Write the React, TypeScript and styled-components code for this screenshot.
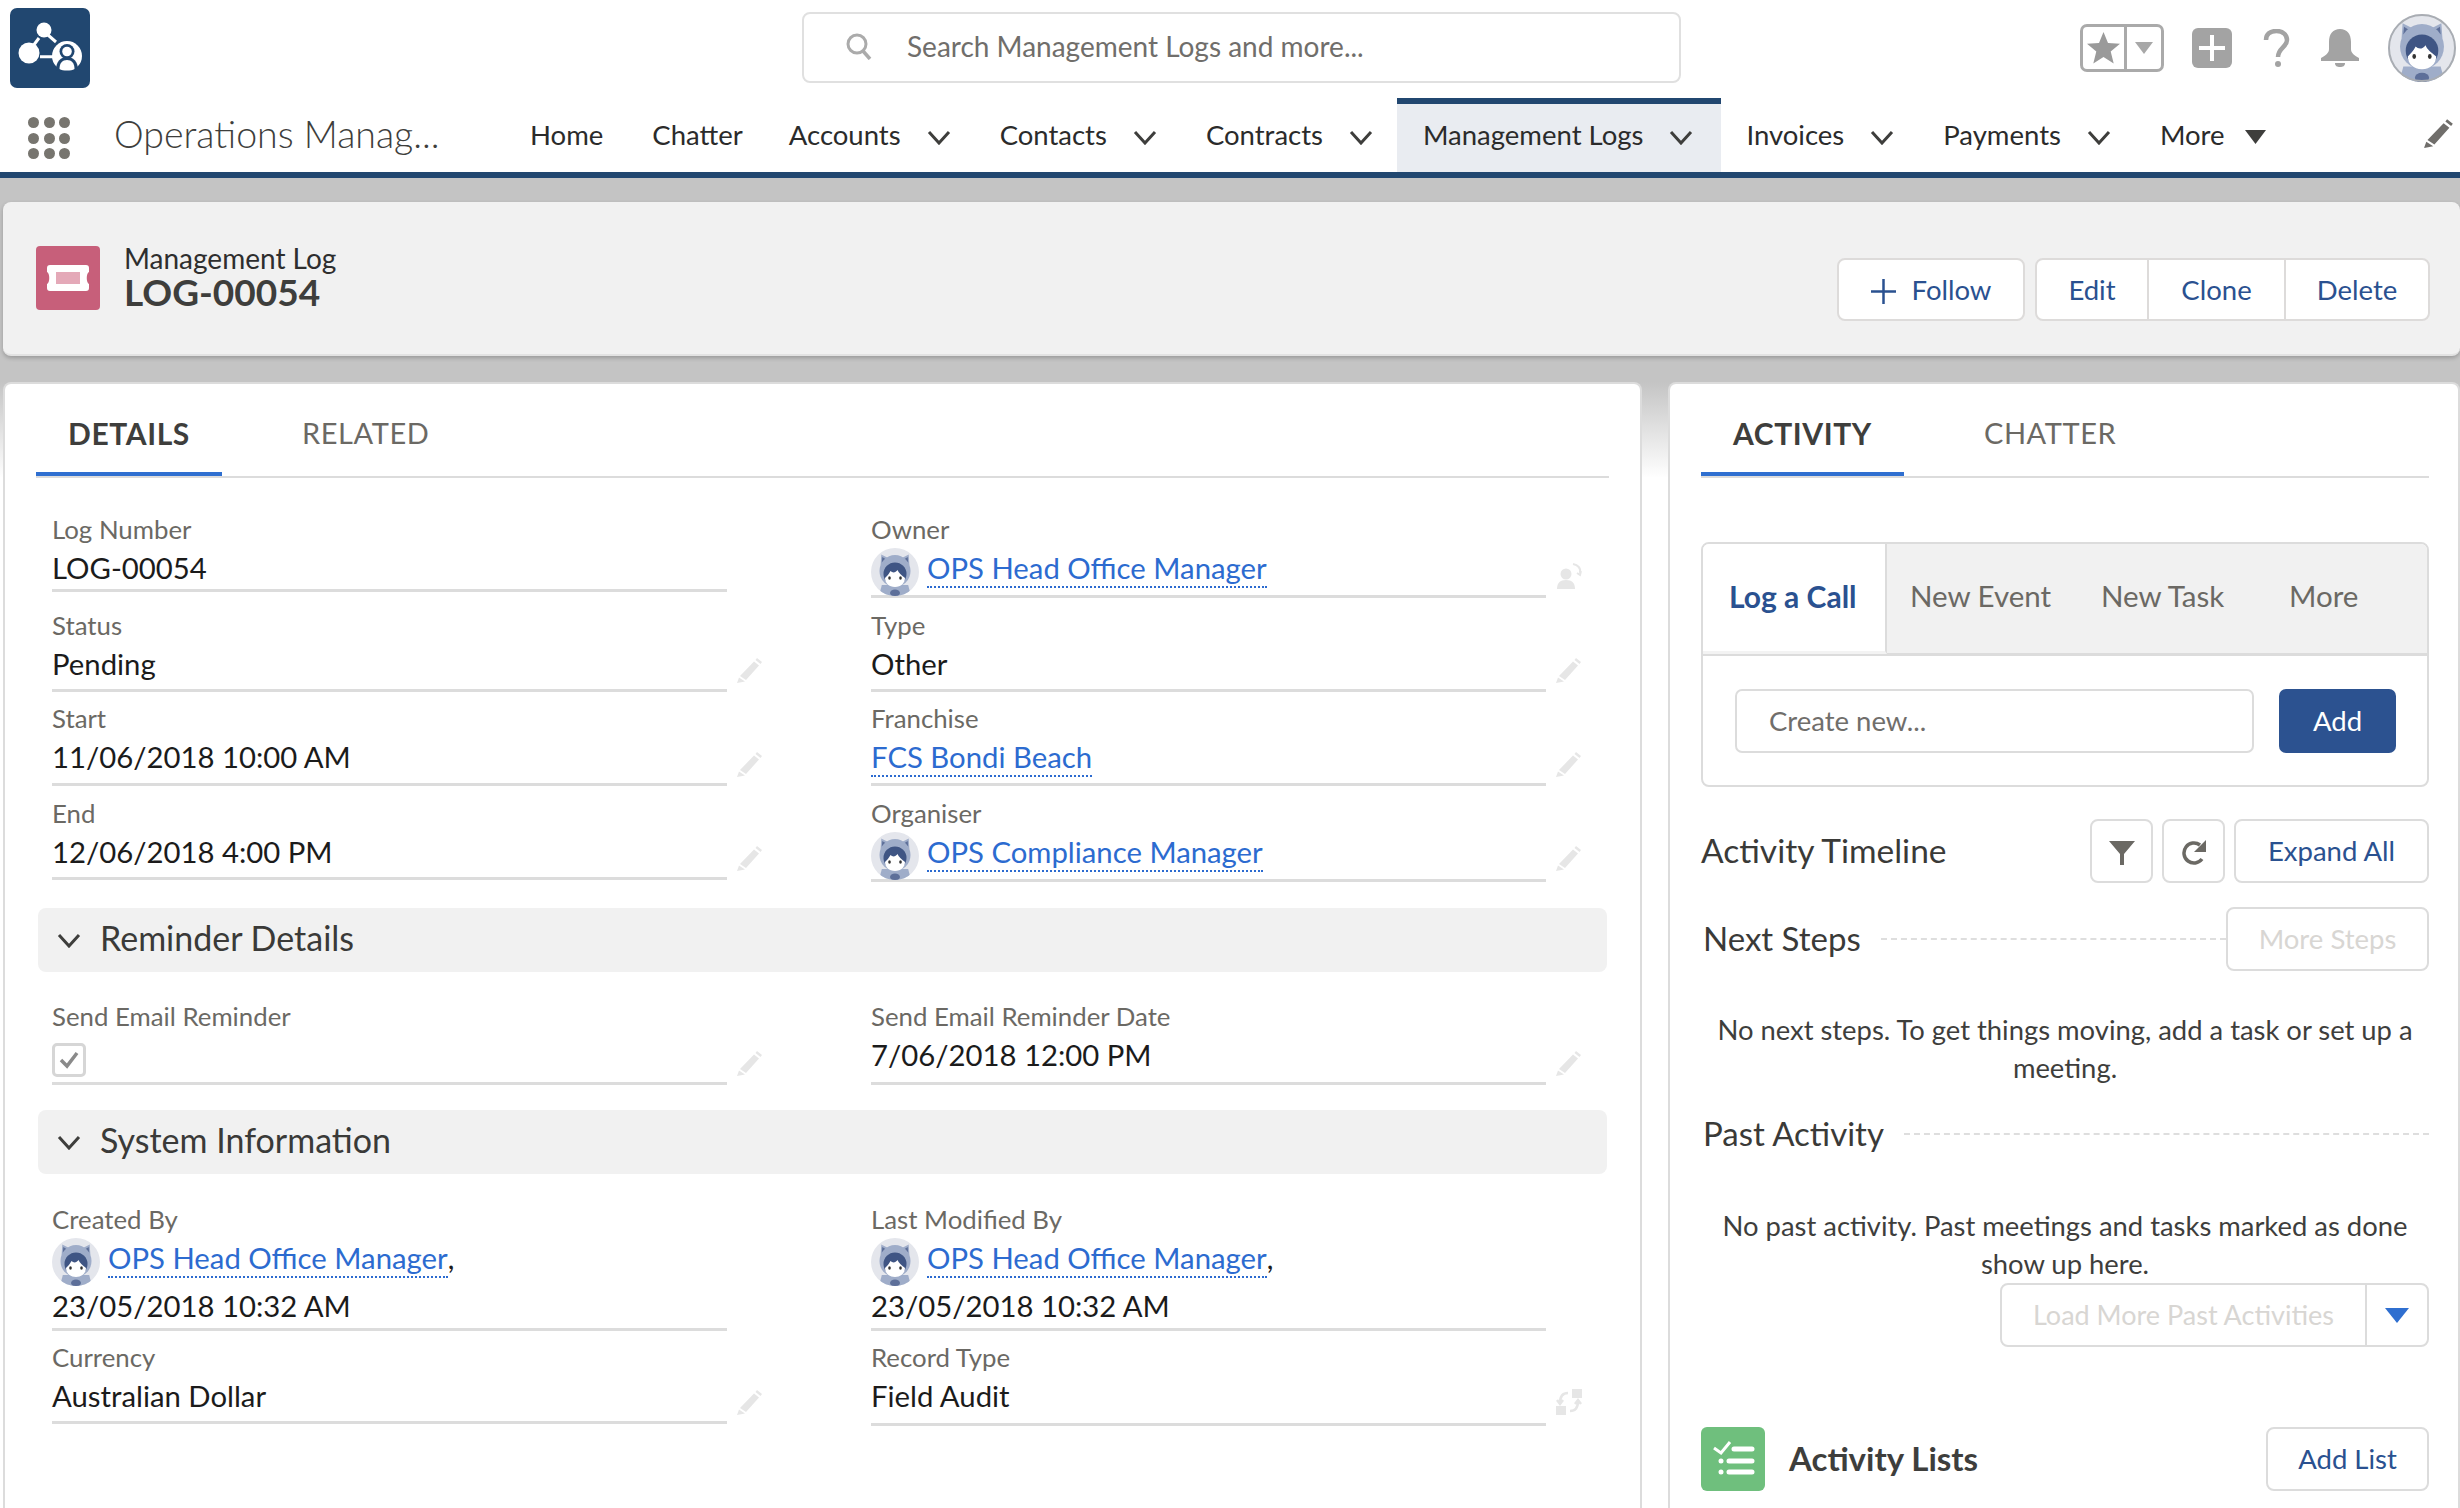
import React from "react";
import styled, { createGlobalStyle } from "styled-components";

const GlobalStyle = createGlobalStyle`
  html, body {
    margin: 0;
    padding: 0;
    background: #fff;
  }
  body {
    width: 2460px;
    height: 1508px;
    overflow: hidden;
    font-family: Lato, "Open Sans", "Liberation Sans", sans-serif;
    color: #16191f;
  }
  * {
    box-sizing: border-box;
  }
`;

const NAVY = "#214770";
const LINK = "#2c6bd0";
const ACTION = "#2a5190";
const LINE = "#dcdcdc";

const TopRow = styled.div`
  display: flex;
  height: 98px;
`;
const Logo = styled.div`
  width: 80px;
  height: 80px;
  margin: 8px 0 0 10px;
  background: ${NAVY};
  border-radius: 7px;
`;
const SearchBox = styled.div`
  display: flex;
  align-items: center;
  width: 879px;
  height: 71px;
  margin: 12px 0 0 712px;
  padding: 0 0 3px 42px;
  border: 2px solid #e0e0e0;
  border-radius: 8px;
  color: #706e6b;
  font-size: 28px;
`;
const SearchText = styled.span`
  margin-left: 35px;
`;
const GlobalIcons = styled.div`
  display: flex;
  align-items: center;
  height: 96px;
  margin-left: 399px;
`;
const FavGroup = styled.div`
  display: flex;
  align-items: center;
  width: 84px;
  height: 48px;
  border: 3px solid #aaa;
  border-radius: 7px;
`;
const FavStar = styled.div`
  display: flex;
  justify-content: center;
  width: 44px;
  border-right: 3px solid #aaa;
  height: 100%;
  align-items: center;
`;
const FavCaret = styled.div`
  flex: 1;
  display: flex;
  justify-content: center;
`;
const HeadIcon = styled.div<{ $gap: number }>`
  display: flex;
  margin-left: ${(p) => p.$gap}px;
`;

const NavRow = styled.div`
  display: flex;
  align-items: stretch;
  height: 80px;
  border-bottom: 6px solid ${NAVY};
  position: relative;
`;
const Launcher = styled.div`
  display: grid;
  grid-template-columns: repeat(3, 11px);
  gap: 4.5px;
  align-content: center;
  width: 42px;
  margin-left: 28px;
  padding-top: 6px;
`;
const Dot = styled.span`
  width: 11px;
  height: 11px;
  border-radius: 50%;
  background: #77756f;
`;
const AppName = styled.div`
  width: 416px;
  margin-left: 44px;
  font-size: 37.5px;
  font-weight: 300;
  line-height: 71px;
  color: #3e3e3c;
`;
const NavList = styled.div`
  display: flex;
  gap: 49px;
`;
const NavItem = styled.div<{ $active?: boolean; $pull?: number }>`
  display: flex;
  align-items: center;
  gap: 26px;
  margin-left: ${(p) => (p.$pull ? -p.$pull : 0)}px;
  padding-bottom: 2px;
  font-size: 27.5px;
  color: #2b2b2b;
  ${(p) =>
    p.$active &&
    `
    margin: 0 -24px 0 -25px;
    padding: 0 28px 2px 26px;
    background: #e9ecf1;
    box-shadow: inset 0 6px 0 ${NAVY};
  `}
`;
const NavEdit = styled.div`
  position: absolute;
  right: 6px;
  top: 20px;
  display: flex;
`;

const Page = styled.div`
  height: 1330px;
  padding: 24px 0 0 3px;
  background: linear-gradient(#c4c4c4 0, #c4c4c4 204px, #fff 300px);
`;
const Highlights = styled.div`
  display: flex;
  align-items: center;
  height: 154px;
  padding: 0 30px 0 33px;
  background: #f1f1f1;
  border-bottom: 2px solid #e2e2e2;
  border-radius: 8px 8px 8px 8px;
  box-shadow: 0 2px 4px rgba(0, 0, 0, 0.22);
`;
const PageIcon = styled.div`
  display: flex;
  align-items: center;
  justify-content: center;
  width: 64px;
  height: 64px;
  background: #c75f7a;
  border-radius: 4px;
`;
const TitleBlock = styled.div`
  margin-left: 24px;
  padding-bottom: 2px;
  flex: 1;
`;
const RecordType = styled.div`
  font-size: 28px;
  line-height: 30px;
  color: #2e2e2e;
`;
const RecordName = styled.div`
  font-size: 37px;
  font-weight: 700;
  line-height: 38px;
  color: #3e3e3c;
`;
const ActionRow = styled.div`
  display: flex;
  gap: 10px;
  margin-top: 22px;
`;
const ButtonGroup = styled.div`
  display: flex;
  height: 63px;
  background: #fff;
  border: 2px solid #dddbda;
  border-radius: 8px;
  overflow: hidden;
`;
const GroupButton = styled.div<{ $w: number; $sep?: boolean }>`
  display: flex;
  align-items: center;
  justify-content: center;
  gap: 16px;
  width: ${(p) => p.$w}px;
  color: ${ACTION};
  font-size: 27.5px;
  ${(p) => p.$sep && "border-left: 2px solid #dddbda;"}
`;

const Columns = styled.div`
  display: flex;
  gap: 26px;
  margin-top: 26px;
`;
const Card = styled.div<{ $w: number; $right: number }>`
  width: ${(p) => p.$w}px;
  height: 1126px;
  padding: 0 ${(p) => p.$right}px 0 31px;
  background: #fff;
  border: 2px solid #dcdcdc;
  border-bottom: 0;
  border-radius: 8px 8px 0 0;
`;
const TabBar = styled.div`
  display: flex;
  gap: 48px;
  height: 94px;
  border-bottom: 2px solid ${LINE};
`;
const Tab = styled.div<{ $active?: boolean }>`
  display: flex;
  align-items: center;
  justify-content: center;
  height: 92px;
  padding: 9px 32px 0;
  font-size: ${(p) => (p.$active ? 30 : 29)}px;
  letter-spacing: 0.6px;
  text-transform: uppercase;
  font-weight: ${(p) => (p.$active ? 700 : 400)};
  color: ${(p) => (p.$active ? "#3e3e3c" : "#6b6964")};
  border-bottom: 4px solid ${(p) => (p.$active ? "#2f6fd0" : "transparent")};
`;

const FieldRows = styled.div<{ $top: number }>`
  margin: ${(p) => p.$top}px -31px 0 -31px;
  padding-left: 47px;
`;
const Row = styled.div<{ $h: number }>`
  display: grid;
  grid-template-columns: 819px 711px;
  height: ${(p) => p.$h}px;
`;
const Field = styled.div`
  display: flex;
  align-items: flex-start;
`;
const FieldBody = styled.div<{ $h: number }>`
  width: 675px;
  height: ${(p) => p.$h}px;
  border-bottom: 3px solid ${LINE};
`;
const Label = styled.div`
  height: 30px;
  font-size: 25.8px;
  line-height: 28px;
  color: #6b6964;
`;
const Value = styled.div`
  margin-top: 5px;
  font-size: 29.3px;
  line-height: 36px;
  color: #1b1b1b;
`;
const Who = styled.div`
  display: flex;
  align-items: flex-start;
  gap: 8px;
  height: 48px;
  margin-top: 3px;
  font-size: 29.3px;
  line-height: 36px;
  color: #1b1b1b;
`;
const WhoDate = styled.div`
  margin-top: 2px;
  font-size: 29.3px;
  line-height: 36px;
  color: #1b1b1b;
`;
const Link = styled.a`
  display: inline-block;
  color: ${LINK};
  border-bottom: 2px dotted ${LINK};
`;
const WhoLink = styled(Link)`
  margin-top: 2px;
`;
const EditSlot = styled.div<{ $h: number }>`
  display: flex;
  align-items: flex-end;
  height: ${(p) => p.$h}px;
  margin-left: 10px;
  padding-bottom: 9px;
`;
const Check = styled.div`
  display: flex;
  align-items: center;
  justify-content: center;
  width: 34px;
  height: 34px;
  margin-top: 11px;
  border: 3px solid #d6d6d6;
  border-radius: 5px;
`;
const Section = styled.div`
  display: flex;
  align-items: center;
  gap: 19px;
  height: 64px;
  margin: 0 2px 0 2px;
  padding: 0 0 5px 19px;
  background: #f1f1f1;
  border-radius: 8px;
  font-size: 34px;
  color: #3a3a38;
`;

const Composer = styled.div`
  height: 245px;
  margin-top: 64px;
  border: 2px solid ${LINE};
  border-radius: 8px;
  overflow: hidden;
`;
const ComposerTabs = styled.div`
  display: flex;
  height: 112px;
  background: #f1f1f1;
  border-bottom: 3px solid ${LINE};
  font-size: 29.5px;
  color: #6b6964;
`;
const ComposerActive = styled.div`
  display: flex;
  align-items: center;
  width: 184px;
  height: 110px;
  padding: 0 0 4px 26px;
  background: #fff;
  border-right: 2px solid ${LINE};
  border-bottom: 3px solid #f3f3f3;
  color: ${ACTION};
  font-size: 30px;
  font-weight: 700;
`;
const ComposerTab = styled.div<{ $w: number }>`
  display: flex;
  align-items: center;
  width: ${(p) => p.$w}px;
  padding-left: 23px;
  padding-bottom: 7px;
`;
const ComposerBody = styled.div`
  display: flex;
  gap: 25px;
  padding: 33px 31px 0 32px;
`;
const CreateInput = styled.div`
  display: flex;
  align-items: center;
  flex: 1;
  height: 64px;
  padding: 0 0 2px 32px;
  border: 2px solid ${LINE};
  border-radius: 7px;
  font-size: 27.5px;
  color: #706e6b;
`;
const AddButton = styled.div`
  display: flex;
  align-items: center;
  justify-content: center;
  width: 117px;
  height: 64px;
  padding-bottom: 2px;
  background: #2c5290;
  border-radius: 7px;
  color: #fff;
  font-size: 27.5px;
`;
const Timeline = styled.div`
  display: flex;
  align-items: center;
  gap: 9px;
  height: 64px;
  margin-top: 32px;
`;
const TimelineTitle = styled.div`
  flex: 1;
  padding-bottom: 3px;
  font-size: 33.5px;
  color: #3a3a38;
`;
const Outline = styled.div<{ $w: number; $muted?: boolean }>`
  display: flex;
  align-items: center;
  justify-content: center;
  flex: none;
  width: ${(p) => p.$w}px;
  height: 64px;
  padding-bottom: 2px;
  background: #fff;
  border: 2px solid ${LINE};
  border-radius: 8px;
  font-size: 27.5px;
  color: ${(p) => (p.$muted ? "#d8d6d3" : ACTION)};
`;
const IconOutline = styled(Outline)`
  padding: 3px 0 0;
`;
const StepHead = styled.div<{ $top: number }>`
  display: flex;
  align-items: center;
  height: 64px;
  margin-top: ${(p) => p.$top}px;
  padding-left: 2px;
  font-size: 33px;
  color: #3a3a38;
`;
const StepTitle = styled.span`
  padding-bottom: 2px;
`;
const Dashes = styled.div`
  flex: 1;
  margin-left: 20px;
  border-top: 2px dashed #dedede;
`;
const Empty = styled.div<{ $top: number }>`
  margin-top: ${(p) => p.$top}px;
  padding: 0 8px;
  font-size: 27.4px;
  line-height: 38px;
  text-align: center;
  color: #3e3e3c;
`;
const LoadRow = styled.div`
  display: flex;
  justify-content: flex-end;
`;
const LoadGroup = styled.div`
  display: flex;
  width: 429px;
  height: 64px;
  border: 2px solid ${LINE};
  border-radius: 8px;
`;
const LoadText = styled.div`
  display: flex;
  align-items: center;
  justify-content: center;
  width: 365px;
  padding-bottom: 2px;
  border-right: 2px solid ${LINE};
  font-size: 27px;
  color: #d8d6d3;
`;
const LoadCaret = styled.div`
  display: flex;
  align-items: center;
  justify-content: center;
  flex: 1;
`;
const ListsRow = styled.div`
  display: flex;
  align-items: center;
  margin-top: 80px;
`;
const ListsIcon = styled.div`
  display: flex;
  width: 64px;
  height: 64px;
  background: #6fbf7d;
  border-radius: 6px;
`;
const ListsTitle = styled.div`
  flex: 1;
  margin-left: 24px;
  padding-bottom: 2px;
  font-size: 33px;
  font-weight: 700;
  color: #3e3e3c;
`;

const LogoMark = () => (
  <svg width="80" height="80" viewBox="0 0 80 80">
    <circle cx="34" cy="22" r="7.5" fill="#fff" />
    <path d="M38 27l8 7M29 30l-6 8M30 48.700h14" stroke="#fff" strokeWidth="3" fill="none" />
    <circle cx="19" cy="45" r="10.5" fill="#fff" />
    <circle cx="57" cy="48" r="15" fill="#fff" />
    <circle cx="57" cy="43.500" r="7.500" fill={NAVY} />
    <path d="M46 62c0-9 5-13 11-13s11 4 11 13c-5 2-17 2-22 0z" fill={NAVY} />
    <circle cx="57" cy="43.500" r="4.800" fill="#fff" />
    <path d="M49.500 61c0-6 3-9 7.500-9s7.500 3 7.500 9c-3 2-12 2-15 0z" fill="#fff" />
  </svg>
);

const Avatar = ({ size, ring }: { size: number; ring?: boolean }) => (
  <svg width={size} height={size} viewBox="0 0 48 48" style={{ flex: "none" }}>
    <defs>
      <clipPath id="avatar-clip">
        <circle cx="24" cy="24" r="24" />
      </clipPath>
    </defs>
    <g clipPath="url(#avatar-clip)">
      <rect width="48" height="48" fill="#e4e6ec" />
      <path d="M10.300 6.500L9.600 17 19 11zM37.700 6.500L38.400 17 29 11z" fill="#9fadc9" />
      <path d="M11.300 9l-.5 5.500L16 12zM36.700 9l.5 5.500L32 12z" fill="#5d6f99" />
      <ellipse cx="24" cy="23" rx="15.500" ry="16" fill="#9fadc9" />
      <path d="M10.800 37h26.400L40 48H8z" fill="#9fadc9" />
      <ellipse cx="24" cy="45" rx="5" ry="3.500" fill="#5d6f99" />
      <circle cx="24" cy="26" r="11.500" fill="#3f5584" />
      <path d="M14 30c2-2 4-4 5.500-7 2 2 5 2 7-1 1 3 4 5 7.500 8 0 5-4 9-10 9s-10-4-10-9z" fill="#fff" />
      <ellipse cx="18.500" cy="30" rx="1.300" ry="1.700" fill="#333" />
      <ellipse cx="29.500" cy="30" rx="1.300" ry="1.700" fill="#333" />
    </g>
    {ring && <circle cx="24" cy="24" r="23.300" fill="none" stroke="#a9adb3" strokeWidth="1.400" />}
  </svg>
);

const Chevron = ({ w = 24, color = "#3e3e3c" }: { w?: number; color?: string }) => (
  <svg width={w} height="15" viewBox="0 0 24 15" style={{ marginTop: 6 }}>
    <path d="M2 2l10 11L22 2" fill="none" stroke={color} strokeWidth="3" />
  </svg>
);

const Pencil = ({ color = "#e6e6e6", w = 26, h = 26 }: { color?: string; w?: number; h?: number }) => (
  <svg width={w} height={h} viewBox="0 0 26 26">
    <path d="M20 1l5 4-1.500 2-5-4zM17 4.500l5 4L9 23 3 19zM2 20.500l6 4L0 26z" fill={color} />
  </svg>
);

const ChangeOwner = () => (
  <svg width="26" height="26" viewBox="0 0 26 26">
    <circle cx="10" cy="11" r="5.500" fill="#e6e6e6" />
    <path d="M1 26c0-6 3-9 9-9s9 3 9 9z" fill="#e6e6e6" />
    <path d="M17 1c5 1 8 4 7 9M21 10l3 2 1-4" fill="none" stroke="#e6e6e6" strokeWidth="2" />
  </svg>
);

const ChangeType = () => (
  <svg width="26" height="26" viewBox="0 0 26 26">
    <rect x="16" y="0" width="10" height="9" fill="#e6e6e6" />
    <rect x="0" y="17" width="10" height="9" fill="#e6e6e6" />
    <path d="M12 4C6 4 4 8 4 14M1 11l3 4 3-4M14 22c6 0 8-4 8-10M19 15l3-4 3 4" fill="none" stroke="#e6e6e6" strokeWidth="2.500" />
  </svg>
);

const OPS_HEAD = "OPS Head Office Manager";

const App = () => (
  <>
    <GlobalStyle />
    <TopRow>
      <Logo>
        <LogoMark />
      </Logo>
      <SearchBox>
        <svg width="26" height="27" viewBox="0 0 26 27">
          <circle cx="11" cy="11" r="9" fill="none" stroke="#ababab" strokeWidth="3" />
          <path d="M17 18l7 8" stroke="#ababab" strokeWidth="3.500" />
        </svg>
        <SearchText>Search Management Logs and more...</SearchText>
      </SearchBox>
      <GlobalIcons>
        <FavGroup>
          <FavStar>
            <svg width="33" height="32" viewBox="0 0 33 32">
              <path d="M16.500 0l4.500 11 12 .800-9.300 7.700 3 12-10.200-6.500L6.300 31.500l3-12L0 11.800 12 11z" fill="#9a9a9a" />
            </svg>
          </FavStar>
          <FavCaret>
            <svg width="18" height="12" viewBox="0 0 18 12">
              <path d="M0 0h18L9 12z" fill="#a8a8a8" />
            </svg>
          </FavCaret>
        </FavGroup>
        <HeadIcon $gap={28}>
          <svg width="40" height="40" viewBox="0 0 40 40">
            <rect width="40" height="40" rx="6" fill="#a3a3a3" />
            <path d="M20 7v26M7 20h26" stroke="#fff" strokeWidth="4" />
          </svg>
        </HeadIcon>
        <HeadIcon $gap={31}>
          <svg width="27" height="38" viewBox="0 0 27 38">
            <path d="M3 11C3 5 7 2 13.500 2S24 6 24 11c0 7-9 8-9 17" fill="none" stroke="#a3a3a3" strokeWidth="4.500" />
            <circle cx="15" cy="35" r="3" fill="#a3a3a3" />
          </svg>
        </HeadIcon>
        <HeadIcon $gap={31}>
          <svg width="38" height="38" viewBox="0 0 38 38">
            <path d="M19 0c7 0 11 5 11 13v7c0 4 3 6 8 9v3H0v-3c5-3 8-5 8-9v-7C8 5 12 0 19 0z" fill="#a3a3a3" />
            <path d="M14 34h10c0 3-2 4-5 4s-5-1-5-4z" fill="#a3a3a3" />
          </svg>
        </HeadIcon>
        <HeadIcon $gap={29}>
          <Avatar size={68} ring />
        </HeadIcon>
      </GlobalIcons>
    </TopRow>
    <NavRow>
      <Launcher>
        {Array.from({ length: 9 }, (_, i) => (
          <Dot key={i} />
        ))}
      </Launcher>
      <AppName>Operations Manag...</AppName>
      <NavList>
        <NavItem>Home</NavItem>
        <NavItem>Chatter</NavItem>
        <NavItem $pull={3}>
          Accounts
          <Chevron />
        </NavItem>
        <NavItem>
          Contacts
          <Chevron />
        </NavItem>
        <NavItem>
          Contracts
          <Chevron />
        </NavItem>
        <NavItem $active>
          Management Logs
          <Chevron />
        </NavItem>
        <NavItem>
          Invoices
          <Chevron />
        </NavItem>
        <NavItem>
          Payments
          <Chevron />
        </NavItem>
        <NavItem>
          More
          <svg width="21" height="14" viewBox="0 0 21 14" style={{ marginTop: 6, marginLeft: -6 }}>
            <path d="M0 0h21L10.500 14z" fill="#3e3e3c" />
          </svg>
        </NavItem>
      </NavList>
      <NavEdit>
        <Pencil color="#706e6b" w={30} h={30} />
      </NavEdit>
    </NavRow>
    <Page>
      <Highlights>
        <PageIcon>
          <svg width="42" height="26" viewBox="0 0 42 26">
            <path
              d="M3 0h36c2 0 3 1 3 3v4c-3 1-3 11 0 12v4c0 2-1 3-3 3H3c-2 0-3-1-3-3v-4c3-1 3-11 0-12V3c0-2 1-3 3-3z"
              fill="#fff"
            />
            <rect x="9" y="7" width="24" height="12" fill="#e4a9b8" />
          </svg>
        </PageIcon>
        <TitleBlock>
          <RecordType>Management Log</RecordType>
          <RecordName>LOG-00054</RecordName>
        </TitleBlock>
        <ActionRow>
          <ButtonGroup>
            <GroupButton $w={184}>
              <svg width="25" height="25" viewBox="0 0 25 25" style={{ marginTop: 4 }}>
                <path d="M12.500 0v25M0 12.500h25" stroke={ACTION} strokeWidth="2.500" />
              </svg>
              Follow
            </GroupButton>
          </ButtonGroup>
          <ButtonGroup>
            <GroupButton $w={110}>Edit</GroupButton>
            <GroupButton $w={137} $sep>
              Clone
            </GroupButton>
            <GroupButton $w={144} $sep>
              Delete
            </GroupButton>
          </ButtonGroup>
        </ActionRow>
      </Highlights>
      <Columns>
        <Card $w={1639} $right={31}>
          <TabBar>
            <Tab $active>Details</Tab>
            <Tab>Related</Tab>
          </TabBar>
          <FieldRows $top={37}>
            <Row $h={96}>
              <Field>
                <FieldBody $h={77}>
                  <Label>Log Number</Label>
                  <Value>LOG-00054</Value>
                </FieldBody>
              </Field>
              <Field>
                <FieldBody $h={83}>
                  <Label>Owner</Label>
                  <Who>
                    <Avatar size={48} />
                    <WhoLink>{OPS_HEAD}</WhoLink>
                  </Who>
                </FieldBody>
                <EditSlot $h={83}>
                  <ChangeOwner />
                </EditSlot>
              </Field>
            </Row>
            <Row $h={93}>
              <Field>
                <FieldBody $h={81}>
                  <Label>Status</Label>
                  <Value>Pending</Value>
                </FieldBody>
                <EditSlot $h={81}>
                  <Pencil />
                </EditSlot>
              </Field>
              <Field>
                <FieldBody $h={81}>
                  <Label>Type</Label>
                  <Value>Other</Value>
                </FieldBody>
                <EditSlot $h={81}>
                  <Pencil />
                </EditSlot>
              </Field>
            </Row>
            <Row $h={95}>
              <Field>
                <FieldBody $h={82}>
                  <Label>Start</Label>
                  <Value>11/06/2018 10:00 AM</Value>
                </FieldBody>
                <EditSlot $h={82}>
                  <Pencil />
                </EditSlot>
              </Field>
              <Field>
                <FieldBody $h={82}>
                  <Label>Franchise</Label>
                  <Value>
                    <Link>FCS Bondi Beach</Link>
                  </Value>
                </FieldBody>
                <EditSlot $h={82}>
                  <Pencil />
                </EditSlot>
              </Field>
            </Row>
            <Row $h={109}>
              <Field>
                <FieldBody $h={81}>
                  <Label>End</Label>
                  <Value>12/06/2018 4:00 PM</Value>
                </FieldBody>
                <EditSlot $h={81}>
                  <Pencil />
                </EditSlot>
              </Field>
              <Field>
                <FieldBody $h={83}>
                  <Label>Organiser</Label>
                  <Who>
                    <Avatar size={48} />
                    <WhoLink>OPS Compliance Manager</WhoLink>
                  </Who>
                </FieldBody>
                <EditSlot $h={81}>
                  <Pencil />
                </EditSlot>
              </Field>
            </Row>
          </FieldRows>
          <Section>
            <Chevron />
            Reminder Details
          </Section>
          <FieldRows $top={30}>
            <Row $h={108}>
              <Field>
                <FieldBody $h={83}>
                  <Label>Send Email Reminder</Label>
                  <Check>
                    <svg width="20" height="18" viewBox="0 0 20 18">
                      <path d="M2 9l6 6L18 2" fill="none" stroke="#8a8a8a" strokeWidth="3.500" />
                    </svg>
                  </Check>
                </FieldBody>
                <EditSlot $h={83}>
                  <Pencil />
                </EditSlot>
              </Field>
              <Field>
                <FieldBody $h={83}>
                  <Label>Send Email Reminder Date</Label>
                  <Value>7/06/2018 12:00 PM</Value>
                </FieldBody>
                <EditSlot $h={83}>
                  <Pencil />
                </EditSlot>
              </Field>
            </Row>
          </FieldRows>
          <Section>
            <Chevron />
            System Information
          </Section>
          <FieldRows $top={31}>
            <Row $h={138}>
              <Field>
                <FieldBody $h={126}>
                  <Label>Created By</Label>
                  <Who>
                    <Avatar size={48} />
                    <span>
                      <WhoLink>{OPS_HEAD}</WhoLink>,
                    </span>
                  </Who>
                  <WhoDate>23/05/2018 10:32 AM</WhoDate>
                </FieldBody>
              </Field>
              <Field>
                <FieldBody $h={126}>
                  <Label>Last Modified By</Label>
                  <Who>
                    <Avatar size={48} />
                    <span>
                      <WhoLink>{OPS_HEAD}</WhoLink>,
                    </span>
                  </Who>
                  <WhoDate>23/05/2018 10:32 AM</WhoDate>
                </FieldBody>
              </Field>
            </Row>
            <Row $h={100}>
              <Field>
                <FieldBody $h={81}>
                  <Label>Currency</Label>
                  <Value>Australian Dollar</Value>
                </FieldBody>
                <EditSlot $h={81}>
                  <Pencil />
                </EditSlot>
              </Field>
              <Field>
                <FieldBody $h={83}>
                  <Label>Record Type</Label>
                  <Value>Field Audit</Value>
                </FieldBody>
                <EditSlot $h={81}>
                  <ChangeType />
                </EditSlot>
              </Field>
            </Row>
          </FieldRows>
        </Card>
        <Card $w={792} $right={29}>
          <TabBar>
            <Tab $active>Activity</Tab>
            <Tab>Chatter</Tab>
          </TabBar>
          <Composer>
            <ComposerTabs>
              <ComposerActive>Log a Call</ComposerActive>
              <ComposerTab $w={191}>New Event</ComposerTab>
              <ComposerTab $w={188}>New Task</ComposerTab>
              <ComposerTab $w={160}>More</ComposerTab>
            </ComposerTabs>
            <ComposerBody>
              <CreateInput>Create new...</CreateInput>
              <AddButton>Add</AddButton>
            </ComposerBody>
          </Composer>
          <Timeline>
            <TimelineTitle>Activity Timeline</TimelineTitle>
            <IconOutline $w={63}>
              <svg width="26" height="24" viewBox="0 0 26 24">
                <path d="M0 0h26L15 13v11h-4V13z" fill="#6b6964" />
              </svg>
            </IconOutline>
            <IconOutline $w={63}>
              <svg width="24" height="26" viewBox="0 0 24 26">
                <path d="M18 5A10 10 0 1 0 20 19" fill="none" stroke="#6b6964" strokeWidth="3.500" />
                <path d="M24 0v12H12z" fill="#6b6964" />
              </svg>
            </IconOutline>
            <Outline $w={195}>Expand All</Outline>
          </Timeline>
          <StepHead $top={24}>
            <StepTitle>Next Steps</StepTitle>
            <Dashes />
            <Outline $w={203} $muted>
              More Steps
            </Outline>
          </StepHead>
          <Empty $top={40}>No next steps. To get things moving, add a task or set up a meeting.</Empty>
          <StepHead $top={15}>
            <StepTitle>Past Activity</StepTitle>
            <Dashes />
          </StepHead>
          <Empty $top={41}>No past activity. Past meetings and tasks marked as done show up here.</Empty>
          <LoadRow>
            <LoadGroup>
              <LoadText>Load More Past Activities</LoadText>
              <LoadCaret>
                <svg width="24" height="15" viewBox="0 0 24 15">
                  <path d="M0 0h24L12 15z" fill="#2f6fd0" />
                </svg>
              </LoadCaret>
            </LoadGroup>
          </LoadRow>
          <ListsRow>
            <ListsIcon>
              <svg width="64" height="64" viewBox="0 0 64 64">
                <path d="M13 21l7 5 9-11" fill="none" stroke="#fff" strokeWidth="3" />
                <path d="M33 22h18M28 34h23M28 45h23" stroke="#fff" strokeWidth="5" strokeLinecap="round" />
                <circle cx="20" cy="34" r="2.500" fill="#fff" />
                <circle cx="20" cy="45" r="2.500" fill="#fff" />
              </svg>
            </ListsIcon>
            <ListsTitle>Activity Lists</ListsTitle>
            <Outline $w={163}>Add List</Outline>
          </ListsRow>
        </Card>
      </Columns>
    </Page>
  </>
);

export default App;
